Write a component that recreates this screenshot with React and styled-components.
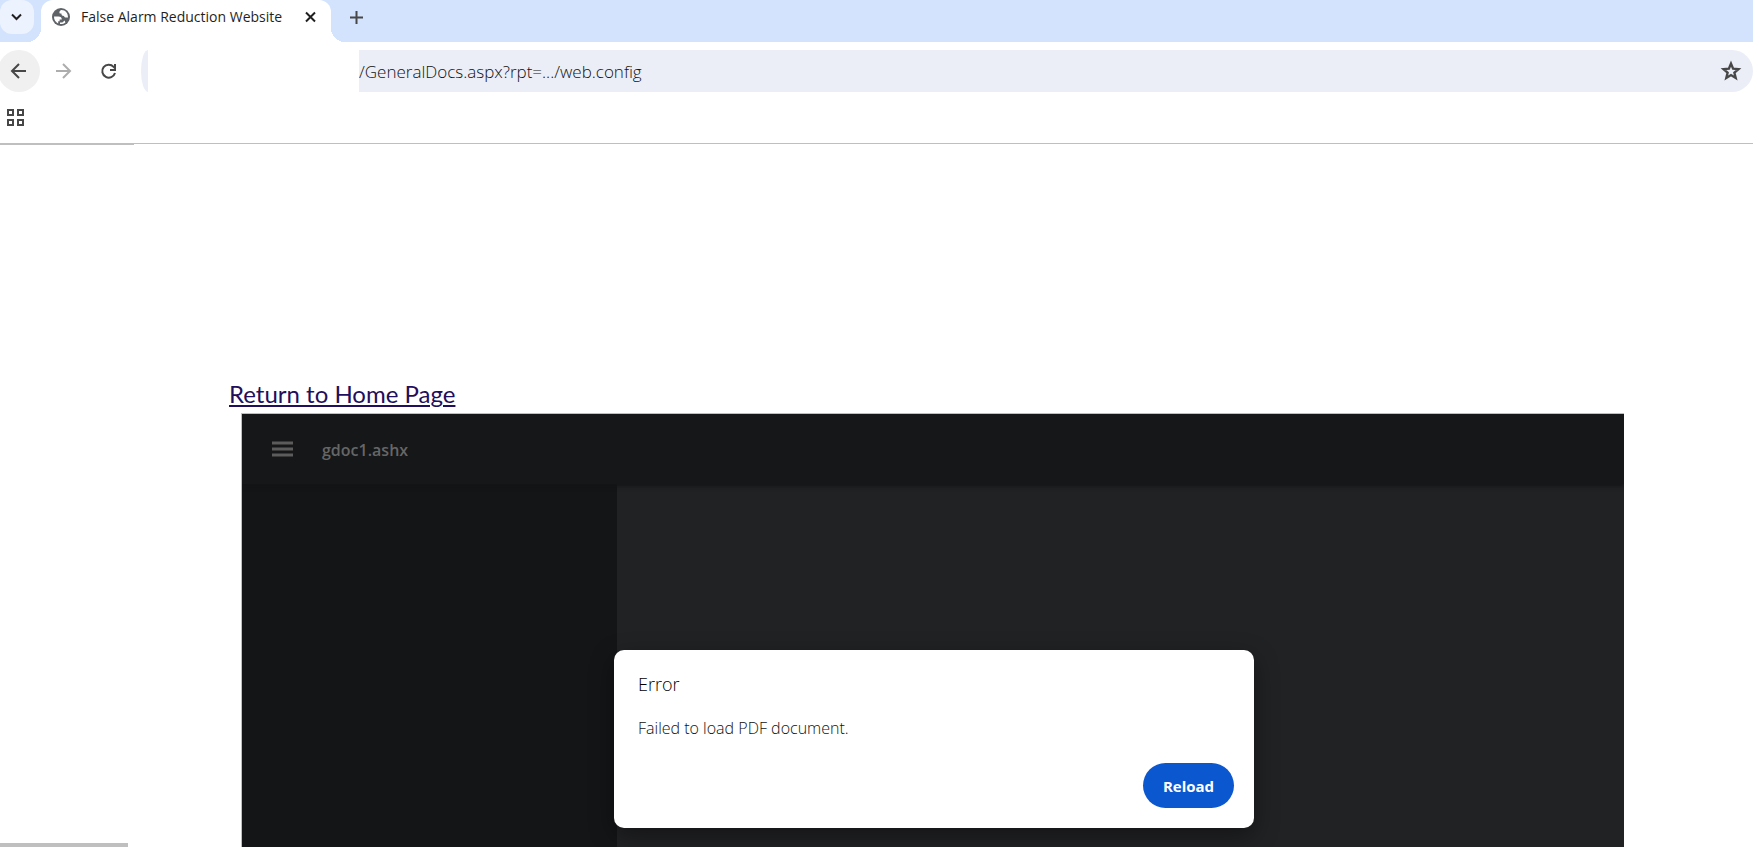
import { useState } from "react";
import styled, { createGlobalStyle } from "styled-components";

function GlobeIcon() {
  return (
    <svg width="18" height="18" viewBox="0 0 18 18" aria-hidden="true">
      <circle cx="9" cy="9" r="9" fill="#5f6368" />
      <path
        d="M9.6 2 C8.2 2.4 7.4 3.2 7.4 4.4 C7.4 5.6 8.4 5.6 9.4 5.6 C9.4 7.4 10.4 8 12 8 C12.4 9.4 13.4 9.8 16 9.4 C16.2 5.4 13.4 2 9.6 2 Z"
        fill="#fff"
      />
      <path
        d="M2 8.6 H6.4 C8.8 8.6 9.8 9.8 9.8 11.6 H7.6 V13.2 H6.2 V15.4 C3.6 14.4 1.8 11.8 2 8.6 Z"
        fill="#fff"
      />
      <path
        d="M8 16 V14.4 H10.4 L12.6 12.4 L13.4 14.4 C12 15.6 10 16.2 8 16 Z"
        fill="#fff"
      />
    </svg>
  );
}

function LineIcon({ size = 18, width = 2, d }) {
  return (
    <svg
      width={size}
      height={size}
      viewBox={`0 0 ${size} ${size}`}
      fill="none"
      stroke="currentColor"
      strokeWidth={width}
      aria-hidden="true"
    >
      <path d={d} />
    </svg>
  );
}

const icons = {
  chevron: "M4 6.5 L8.5 11 L13 6.5",
  close: "M5 4.5 L14 13.5 M14 4.5 L5 13.5",
  add: "M9.5 3 V16 M3 9.5 H16",
  back: "M16 9 H2 M9 2 L2 9 L9 16",
  forward: "M1 9 H15 M8 2 L15 9 L8 16",
  refresh: "M15 11 A6.5 6.5 0 1 1 13.6 4.8 L15.4 6.6 M15 2 V8 H10",
  apps: "M1 1 H6 V6 H1 Z M11 1 H16 V6 H11 Z M1 11 H6 V16 H1 Z M11 11 H16 V16 H11 Z",
  star: "M11 3.6 L13.1 8.6 L18.5 9.1 L14.4 12.7 L15.7 18 L11 15.1 L6.3 18 L7.6 12.7 L3.5 9.1 L8.9 8.6 Z",
  menu: "M0 4 H21 M0 10 H21 M0 16 H21",
};

function App() {
  const [url, setUrl] = useState("/GeneralDocs.aspx?rpt=.../web.config");

  return (
    <>
      <GlobalStyle />
      <Browser>
        <TabStrip>
          <TabSearch type="button" aria-label="Search tabs">
            <LineIcon d={icons.chevron} />
          </TabSearch>
          <Tab>
            <GlobeIcon />
            <TabTitle>False Alarm Reduction Website</TabTitle>
            <IconButton type="button" aria-label="Close tab" $size={20}>
              <LineIcon d={icons.close} />
            </IconButton>
          </Tab>
          <NewTab type="button" aria-label="New tab" $size={34}>
            <LineIcon d={icons.add} />
          </NewTab>
        </TabStrip>
        <Toolbar>
          <IconButton type="button" aria-label="Back" $size={42} $filled>
            <LineIcon d={icons.back} />
          </IconButton>
          <IconButton type="button" aria-label="Forward" $size={42} disabled>
            <LineIcon d={icons.forward} />
          </IconButton>
          <IconButton type="button" aria-label="Refresh" $size={42}>
            <LineIcon d={icons.refresh} />
          </IconButton>
          <AddressStart />
          <AddressBar>
            <AddressInput
              aria-label="Address"
              value={url}
              onChange={(e) => setUrl(e.target.value)}
            />
            <IconButton type="button" aria-label="Bookmark page" $size={32}>
              <LineIcon size={22} width={2.4} d={icons.star} />
            </IconButton>
          </AddressBar>
        </Toolbar>
        <BookmarksBar>
          <IconButton type="button" aria-label="Apps" $size={32}>
            <LineIcon d={icons.apps} />
          </IconButton>
        </BookmarksBar>
        <Page>
          <TopMark />
          <HomeLink href="#home">Return to Home Page</HomeLink>
          <Viewer>
            <ViewerHeader>
              <MenuButton type="button" aria-label="Menu" $size={32}>
                <LineIcon size={22} width={3} d={icons.menu} />
              </MenuButton>
              <FileName>gdoc1.ashx</FileName>
            </ViewerHeader>
            <ViewerBody>
              <Sidebar />
            </ViewerBody>
            <Dialog role="alertdialog" aria-labelledby="dialog-title">
              <DialogTitle id="dialog-title">Error</DialogTitle>
              <DialogText>Failed to load PDF document.</DialogText>
              <ReloadButton type="button">Reload</ReloadButton>
            </Dialog>
          </Viewer>
        </Page>
        <StatusMark />
      </Browser>
    </>
  );
}
export default App;

const GlobalStyle = createGlobalStyle`
  * {
    box-sizing: border-box;
  }
  body {
    margin: 0;
    background: #fff;
    font-family: "Open Sans", "Noto Sans", sans-serif;
  }
  button, input {
    font-family: inherit;
  }
`;

const Browser = styled.div`
  position: relative;
  display: flex;
  flex-direction: column;
  min-height: 100vh;
  overflow: hidden;
`;

const TabStrip = styled.div`
  display: flex;
  align-items: flex-start;
  height: 42px;
  background: #d3e3fd;
`;

const IconButton = styled.button`
  display: flex;
  flex: none;
  align-items: center;
  justify-content: center;
  width: ${(props) => props.$size}px;
  height: ${(props) => props.$size}px;
  padding: 0;
  border: 0;
  border-radius: 50%;
  color: #474747;
  background: ${(props) => (props.$filled ? "#f0f0f0" : "transparent")};

  &:disabled {
    color: #adadad;
  }
`;

const TabSearch = styled.button`
  display: flex;
  align-items: center;
  justify-content: center;
  width: 34px;
  height: 34px;
  padding: 0;
  border: 0;
  border-radius: 12px;
  color: #1f1f1f;
  background: #ecf3fe;
`;

const Tab = styled.div`
  position: relative;
  display: flex;
  align-items: center;
  width: 290px;
  height: 42px;
  margin-left: 7px;
  padding: 0 11px 8px;
  border-radius: 12px 12px 0 0;
  color: #1f1f1f;
  background: #fff;

  &::before,
  &::after {
    content: "";
    position: absolute;
    bottom: 0;
    width: 14px;
    height: 14px;
  }
  &::before {
    right: 100%;
    background: radial-gradient(circle at 0 0, transparent 14px, #fff 14px);
  }
  &::after {
    left: 100%;
    background: radial-gradient(circle at 100% 0, transparent 14px, #fff 14px);
  }
  ${IconButton} {
    color: inherit;
  }
`;

const TabTitle = styled.span`
  flex: 1;
  margin-left: 11px;
  font-size: 14px;
  line-height: 20px;
  white-space: nowrap;
`;

const NewTab = styled(IconButton)`
  margin-left: 8px;
`;

const Toolbar = styled.div`
  display: flex;
  gap: 3px;
  height: 50px;
  margin-left: -2px;
  padding-top: 8px;
`;

const AddressStart = styled.div`
  width: 7px;
  margin: 0 208px 0 8px;
  border-radius: 7px 0 0 7px / 21px 0 0 21px;
  background: #ebeef7;
`;

const AddressBar = styled.div`
  display: flex;
  flex: 1;
  align-items: center;
  height: 42px;
  padding-right: 6px;
  border-radius: 0 21px 21px 0;
  background: #ebeef7;
`;

const AddressInput = styled.input`
  flex: 1;
  min-width: 0;
  padding: 2px 0 0;
  border: 0;
  outline: 0;
  color: #111;
  background: transparent;
  font-size: 17px;
  font-weight: 300;
  line-height: 24px;
`;

const BookmarksBar = styled.div`
  height: 52px;
  padding-top: 10px;
  border-bottom: 1px solid #bfbfbf;
`;

const Page = styled.main`
  display: flex;
  flex: 1;
  flex-direction: column;
  align-items: flex-start;
`;

const TopMark = styled.div`
  width: 134px;
  height: 1px;
  background: #bfbfbf;
`;

const HomeLink = styled.a`
  margin: 233px 0 3px 229px;
  color: #1f0f5c;
  font-family: Lato, sans-serif;
  font-size: 24px;
  line-height: 32px;
  text-decoration-thickness: 2px;
  text-underline-offset: 2px;
`;

const Viewer = styled.section`
  position: relative;
  display: flex;
  flex: 1;
  flex-direction: column;
  align-self: stretch;
  margin: 0 129px 0 241px;
  border: solid #bfbfbf;
  border-width: 1px 0 0 1px;
  overflow: hidden;
`;

const ViewerHeader = styled.header`
  z-index: 1;
  display: flex;
  align-items: center;
  height: 70px;
  padding: 2px 0 0 25px;
  background: #161718;
  box-shadow: 0 2px 4px #131415;
`;

const MenuButton = styled(IconButton)`
  color: #5c5c5c;
`;

const FileName = styled.span`
  margin-left: 23px;
  color: #666;
  font-size: 16px;
  font-weight: 600;
  line-height: 24px;
`;

const ViewerBody = styled.div`
  display: flex;
  flex: 1;
  min-height: 363px;
  background: #212224;
`;

const Sidebar = styled.aside`
  width: 375px;
  background: #141517;
`;

const Dialog = styled.div`
  position: absolute;
  z-index: 2;
  inset: 236px 0 auto 2px;
  display: flex;
  flex-direction: column;
  width: 640px;
  margin: 0 auto;
  padding: 22px 20px 20px 24px;
  border-radius: 10px;
  background: #fff;
  box-shadow: 0 8px 24px rgba(0, 0, 0, 0.4);
`;

const DialogTitle = styled.h2`
  margin: 0;
  color: #000;
  font-size: 18px;
  font-weight: 300;
  line-height: 24px;
`;

const DialogText = styled.p`
  margin: 20px 0 23px;
  color: #111;
  font-size: 16px;
  font-weight: 300;
  line-height: 24px;
`;

const ReloadButton = styled.button`
  align-self: flex-end;
  width: 91px;
  height: 45px;
  padding: 0;
  border: 0;
  border-radius: 23px;
  color: #fff;
  background: #0b57d0;
  font-size: 15px;
  font-weight: 700;
`;

const StatusMark = styled.div`
  position: absolute;
  bottom: 0;
  left: 0;
  width: 128px;
  height: 4px;
  background: #bfbfbf;
`;
